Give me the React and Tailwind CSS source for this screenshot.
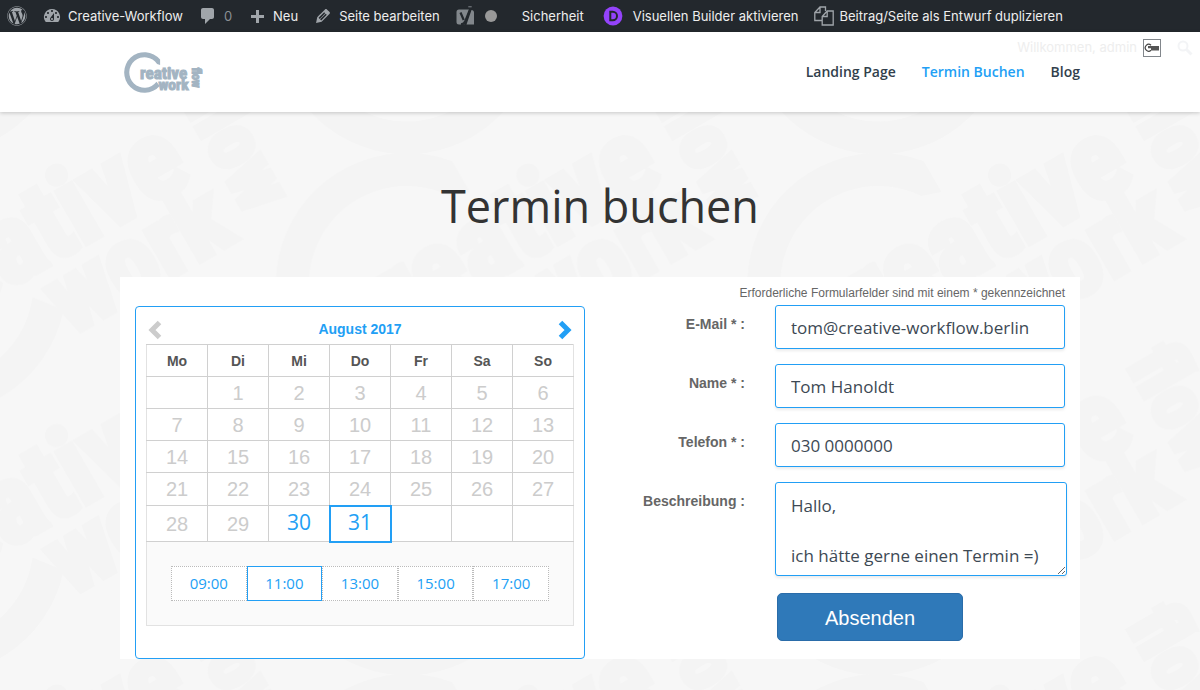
import React, { useState } from "react";
import { FaWordpress } from "react-icons/fa";

const logoFont = { fontFamily: '"Liberation Sans Narrow", "Roboto Condensed", sans-serif', fontWeight: 700 };

/* Brand mark, drawn around the centre of its ring. */
function BrandMark({ color }) {
  return (
    <g fill={color} stroke={color} style={logoFont}>
      <path
        d="M15.6 -13A20.3 20.3 0 1 0 15.2 13.4L12 9.3A15.2 15.2 0 1 1 12.6 -8.5L15.6 -7.5Z"
        stroke="none"
      />
      <g strokeWidth="1">
        <text x="-4.6" y="6.2" fontSize="17.2">reative</text>
        <text x="14" y="17.4" fontSize="15.5">work</text>
        <text transform="translate(47.2 -5) rotate(90)" fontSize="12">flow</text>
      </g>
    </g>
  );
}

function Wallpaper() {
  const shifts = [-1, 0, 1];
  return (
    <svg className="absolute inset-0 h-full w-full" aria-hidden="true">
      <defs>
        <pattern id="brand-tile" width="471.5" height="260.5" patternUnits="userSpaceOnUse" x="0" y="0">
          {shifts.map((i) =>
            shifts.map((j) => (
              <g key={`${i}${j}`} transform={`translate(${407 + i * 471.5} ${172 + j * 260.5}) rotate(-30) scale(6.45)`}>
                <BrandMark color="#f4f4f4" />
              </g>
            ))
          )}
        </pattern>
      </defs>
      <rect width="100%" height="100%" fill="url(#brand-tile)" />
    </svg>
  );
}

function Dashicon({ d }) {
  return (
    <svg viewBox="0 0 20 20" className="size-5 shrink-0" fill="#a0a5aa" aria-hidden="true">
      <path d={d} />
    </svg>
  );
}

const icons = {
  gauge:
    "M3.76 16h12.48A7.998 7.998 0 0 0 10 3a7.998 7.998 0 0 0-6.24 13zM10 4c.55 0 1 .45 1 1s-.45 1-1 1-1-.45-1-1 .45-1 1-1zM6 6c.55 0 1 .45 1 1s-.45 1-1 1-1-.45-1-1 .45-1 1-1zm8 0c.55 0 1 .45 1 1s-.45 1-1 1-1-.45-1-1 .45-1 1-1zm-5.37 5.55L12 7v6c0 1.1-.9 2-2 2s-2-.9-2-2c0-.57.24-1.08.63-1.45zM4 10c.55 0 1 .45 1 1s-.45 1-1 1-1-.45-1-1 .45-1 1-1zm12 0c.55 0 1 .45 1 1s-.45 1-1 1-1-.45-1-1 .45-1 1-1zm-5 3c0-.55-.45-1-1-1s-1 .45-1 1 .45 1 1 1 1-.45 1-1z",
  comment: "M5 2h9c1.1 0 2 .9 2 2v7c0 1.1-.9 2-2 2h-2l-5 5v-5H5c-1.1 0-2-.9-2-2V4c0-1.1.9-2 2-2z",
  plus: "M17 9v3h-5v5H9v-5H4V9h5V4h3v5h5z",
  pencil:
    "M13.89 3.39l2.71 2.72c.46.46.42 1.24.03 1.64l-8.01 8.02-5.56 1.16 1.16-5.58s7.6-7.63 7.99-8.03c.39-.39 1.22-.39 1.68.07zm-2.73 2.79l-5.59 5.61 1.11 1.11 5.54-5.65zm-2.97 8.23l5.58-5.6-1.07-1.08-5.59 5.6z",
};

function BarItem({ icon, children }) {
  return (
    <a href="#" className="flex items-center gap-1.5 whitespace-nowrap">
      {icon}
      {children && <span>{children}</span>}
    </a>
  );
}

function AdminBar() {
  return (
    <nav aria-label="Werkzeugleiste" className="flex h-8 items-center gap-[15px] bg-[#23282d] pl-[7px] font-['Inter',sans-serif] text-[13px] leading-8 text-[#eee]">
      <a href="#" aria-label="WordPress">
        <FaWordpress className="size-5 text-[#a0a5aa]" />
      </a>
      <BarItem icon={<Dashicon d={icons.gauge} />}>Creative-Workflow</BarItem>
      <BarItem icon={<Dashicon d={icons.comment} />}>
        <span className="text-[#8a8f94]">0</span>
      </BarItem>
      <BarItem icon={<Dashicon d={icons.plus} />}>Neu</BarItem>
      <BarItem icon={<Dashicon d={icons.pencil} />}>Seite bearbeiten</BarItem>
      <a href="#" aria-label="Yoast SEO" className="flex items-center gap-2.5">
        <svg viewBox="0 0 20 20" className="size-5" aria-hidden="true">
          <path d="M4 3.5h10.2L9.2 18.5H4a2.5 2.5 0 0 1-2.5-2.5V6A2.5 2.5 0 0 1 4 3.5zM16.5 3.9c1.5.3 2.5 1 2.5 2.6v12h-7.5z" fill="#82878c" />
          <path d="M5.5 6.5l3.2 7.5M16 1l-5.6 14c-.8 2-2 3.2-4.4 3.4" fill="none" stroke="#23282d" strokeWidth="2.2" />
          <path d="M13.3.8h3.4" stroke="#82878c" strokeWidth="1" />
        </svg>
        <span className="size-3 rounded-full bg-[#999]" />
      </a>
      <span className="px-2.5">
        <BarItem>Sicherheit</BarItem>
      </span>
      <a href="#" className="-ml-1.5 flex items-center gap-2.5 whitespace-nowrap">
        <svg viewBox="0 0 20 20" className="size-5" aria-hidden="true">
          <circle cx="10" cy="10" r="9.4" fill="#9443fb" />
          <path d="M7.3 5.8h2.5a4.2 4.2 0 0 1 0 8.4H7.3z" fill="none" stroke="#23282d" strokeWidth="2" />
        </svg>
        <span>Visuellen Builder aktivieren</span>
      </a>
      <BarItem
        icon={
          <svg viewBox="0 0 20 20" className="size-5" fill="none" stroke="#a0a5aa" strokeWidth="1.3" aria-hidden="true">
            <path d="M8 14.5H.8V6.5L6 1h5.5v4M6 1v5.5H.8M8.2 10.5l5-5.5h6v14h-11zM13.2 5v5.5h-5" />
          </svg>
        }
      >
        Beitrag/Seite als Entwurf duplizieren
      </BarItem>
    </nav>
  );
}

function Header() {
  return (
    <header className="relative z-10 h-20 bg-white shadow-[0_1px_4px_rgba(0,0,0,0.2)]">
      <div className="mx-auto flex h-full w-4/5 items-center justify-between pl-1">
        <a href="#" aria-label="Creative Workflow">
          <svg viewBox="-20.5 -22.5 84 44" className="h-11 w-[84px]" aria-hidden="true">
            <BrandMark color="#a3b4c2" />
          </svg>
        </a>
        <nav aria-label="Hauptmenü" className="flex gap-[26px] font-['Open_Sans',sans-serif] text-sm font-semibold text-[#323f4c]">
          <a href="#">Landing Page</a>
          <a href="#" aria-current="page" className="text-[#229ff5]">Termin Buchen</a>
          <a href="#">Blog</a>
        </nav>
      </div>
      <div className="absolute top-1.5 right-[5px] flex items-center gap-1.5 font-['Inter',sans-serif] text-[13px] text-[#eee]">
        <a href="#" className="flex items-center gap-1.5">
          <span>Willkommen, admin</span>
          <svg viewBox="0 0 18 18" className="size-[18px]" aria-hidden="true">
            <rect x="0.5" y="0.5" width="17" height="17" fill="#fff" stroke="#82878c" />
            <path d="M8 6.2A3.4 3.4 0 1 0 8 11.2" fill="none" stroke="#444" strokeWidth="1.2" />
            <path d="M5 8.2h11M8 10.4h8" stroke="#555" strokeWidth="2.2" />
          </svg>
        </a>
        <button type="button" aria-label="Suchen" className="ml-2">
          <svg viewBox="0 0 20 20" className="size-5" fill="none" stroke="#f3f4f6" strokeWidth="2" aria-hidden="true">
            <circle cx="8" cy="8" r="4.5" />
            <path d="M11.5 11.5l5 5" strokeWidth="3" />
          </svg>
        </button>
      </div>
    </header>
  );
}

const days = ["Mo", "Di", "Mi", "Do", "Fr", "Sa", "So"];
const weeks = [
  ["", 1, 2, 3, 4, 5, 6],
  [7, 8, 9, 10, 11, 12, 13],
  [14, 15, 16, 17, 18, 19, 20],
  [21, 22, 23, 24, 25, 26, 27],
  [28, 29, 30, 31, "", "", ""],
];
const rowHeights = ["h-8", "h-8", "h-8", "h-[33px]", "h-9"];
const slots = ["09:00", "11:00", "13:00", "15:00", "17:00"];

function Chevron({ flip, className }) {
  return (
    <svg viewBox="0 0 14 20" className={className} fill="none" stroke="currentColor" strokeWidth="5" aria-hidden="true">
      <path d={flip ? "M2.5 2.5L10 10l-7.5 7.5" : "M11.5 2.5L4 10l7.5 7.5"} />
    </svg>
  );
}

function Calendar() {
  const [day, setDay] = useState(31);
  const [slot, setSlot] = useState("11:00");
  return (
    <section aria-label="Kalender" className="rounded border border-[#229ff5] bg-white px-2.5 pt-2.5 pb-8">
      <div className="mb-0.5 flex h-[25px] items-center justify-between px-0.5">
        <button type="button" aria-label="Vorheriger Monat" className="text-[#ccc]">
          <Chevron className="h-5 w-3.5" />
        </button>
        <h2 className="pb-0.5 text-sm font-bold text-[#229ff5]">August 2017</h2>
        <button type="button" aria-label="Nächster Monat" className="text-[#229ff5]">
          <Chevron flip className="h-5 w-3.5" />
        </button>
      </div>
      <table className="w-full table-fixed border-collapse border border-[#e2e2e2] text-center">
        <thead>
          <tr className="h-8">
            {days.map((d) => (
              <th key={d} className="border border-[#d0d0d0] text-sm font-bold text-[#555] first:border-l-[#e2e2e2] last:border-r-[#e2e2e2]">{d}</th>
            ))}
          </tr>
        </thead>
        <tbody>
          {weeks.map((week, w) => (
            <tr key={w} className={rowHeights[w]}>
              {week.map((n, i) => {
                const open = n === 30 || n === 31;
                return (
                  <td
                    key={i}
                    className={`border border-[#d0d0d0] p-0 text-xl leading-7 text-[#ccc] first:border-l-[#e2e2e2] last:border-r-[#e2e2e2] ${
                      open && n === day ? "outline-2 -outline-offset-1 outline-[#229ff5]" : ""
                    }`}
                  >
                    {open ? (
                      <button type="button" onClick={() => setDay(n)} className="block w-full pb-1 font-['Open_Sans',sans-serif] text-[21px] text-[#229ff5]">
                        {n}
                      </button>
                    ) : (
                      n
                    )}
                  </td>
                );
              })}
            </tr>
          ))}
        </tbody>
      </table>
      <div className="border border-t-0 border-[#e2e2e2] bg-[#fafafa] p-6">
        <div className="grid grid-cols-5 font-['Open_Sans',sans-serif] text-[15px] text-[#229ff5]">
          {slots.map((s) => (
            <button
              key={s}
              type="button"
              onClick={() => setSlot(s)}
              className={`h-[35px] border bg-white ${s === slot ? "border-solid border-[#229ff5]" : "border-dotted border-[#bbb]"}`}
            >
              {s}
            </button>
          ))}
        </div>
      </div>
    </section>
  );
}

function Field({ id, label, required, children }) {
  return (
    <div className="flex gap-[30px]">
      <label htmlFor={id} className="w-[130px] shrink-0 pt-[9px] text-right text-sm font-bold text-[#666]">
        {label} {required && "* "}:
      </label>
      {children}
    </div>
  );
}

const control =
  "min-w-0 flex-1 rounded-[3px] border border-[#229ff5] bg-white px-[15px] font-['Open_Sans',sans-serif] text-[17px] text-[#3d4954] shadow-[0_2px_3px_rgba(0,0,0,0.08)]";

function BookingForm() {
  return (
    <form onSubmit={(e) => e.preventDefault()} className="flex flex-col px-[15px] pt-[5px]">
      <p className="text-right text-xs leading-[23px] text-[#666]">Erforderliche Formularfelder sind mit einem * gekennzeichnet</p>
      <div className="flex flex-col gap-[15px]">
        <Field id="email" label="E-Mail" required>
          <input id="email" type="email" defaultValue="tom@creative-workflow.berlin" className={`${control} h-11`} />
        </Field>
        <Field id="name" label="Name" required>
          <input id="name" type="text" defaultValue="Tom Hanoldt" className={`${control} h-11`} />
        </Field>
        <Field id="phone" label="Telefon" required>
          <input id="phone" type="tel" defaultValue="030 0000000" className={`${control} h-11`} />
        </Field>
        <Field id="description" label="Beschreibung">
          <textarea
            id="description"
            defaultValue={"Hallo,\n\nich hätte gerne einen Termin =)"}
            className={`${control} -mr-0.5 h-[94px] overflow-hidden pt-2.5 leading-[25px]`}
          />
        </Field>
      </div>
      <div className="mt-[17px] pl-[162px]">
        <button type="submit" className="h-12 w-[186px] rounded-[5px] border border-[#2a6ca9] bg-[#2f79b9] pt-0.5 text-xl font-medium text-white">
          Absenden
        </button>
      </div>
    </form>
  );
}

export default function App() {
  return (
    <div className="flex min-h-screen flex-col bg-[#f7f7f7] font-['Liberation_Sans',sans-serif]">
      <AdminBar />
      <Header />
      <main className="relative flex-1 overflow-hidden">
        <Wallpaper />
        <div className="relative mx-auto w-4/5 pt-[62px] pb-[30px]">
          <h1 className="pb-[39px] text-center font-['Open_Sans',sans-serif] text-[45px] leading-[64px] text-[#333]">Termin buchen</h1>
          <div className="grid grid-cols-2 bg-white">
            <div className="px-[15px] pt-[29px]">
              <Calendar />
            </div>
            <BookingForm />
          </div>
        </div>
      </main>
    </div>
  );
}
